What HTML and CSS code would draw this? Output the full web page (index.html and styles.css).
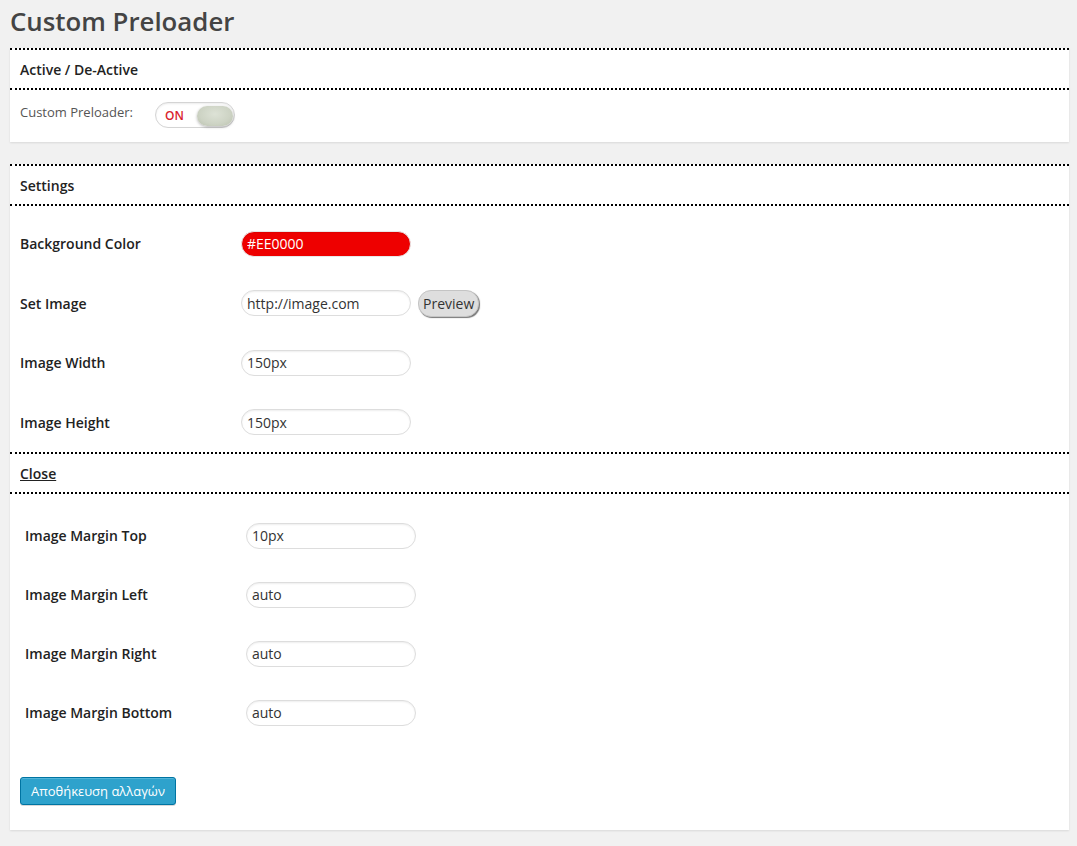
FILE: index.html
```html
<!DOCTYPE html>
<html>
<head>
<meta charset="utf-8">
<link rel="stylesheet" href="styles.css">
</head>
<body>
<div class="wrap">
  <h2 class="title">Custom Preloader</h2>

  <div class="panel panel-active">
    <div class="panel-head">Active / De-Active</div>
    <div class="toggle-row">
      <span class="toggle-label">Custom Preloader:</span>
      <span class="toggle"><span class="toggle-on">ON</span><span class="knob"></span></span>
    </div>
  </div>

  <div class="panel panel-settings">
    <div class="panel-head">Settings</div>
    <div class="rows rows-main">
      <div class="row">
        <span class="label">Background Color</span>
        <input class="field field-red" type="text" value="#EE0000">
      </div>
      <div class="row">
        <span class="label">Set Image</span>
        <input class="field" type="text" value="http://image.com">
        <button class="preview">Preview</button>
      </div>
      <div class="row">
        <span class="label">Image Width</span>
        <input class="field" type="text" value="150px">
      </div>
      <div class="row">
        <span class="label">Image Height</span>
        <input class="field" type="text" value="150px">
      </div>
    </div>
    <div class="panel-head"><span class="close">Close</span></div>
    <div class="rows rows-margin">
      <div class="row">
        <span class="label">Image Margin Top</span>
        <input class="field" type="text" value="10px">
      </div>
      <div class="row">
        <span class="label">Image Margin Left</span>
        <input class="field" type="text" value="auto">
      </div>
      <div class="row">
        <span class="label">Image Margin Right</span>
        <input class="field" type="text" value="auto">
      </div>
      <div class="row">
        <span class="label">Image Margin Bottom</span>
        <input class="field" type="text" value="auto">
      </div>
    </div>
    <div class="actions">
      <button class="save">Αποθήκευση αλλαγών</button>
    </div>
  </div>
</div>
</body>
</html>
```

FILE: styles.css
```css
html, body {
  margin: 0;
  padding: 0;
  background: #f1f1f1;
}
body {
  font-family: "Open Sans", "Liberation Sans", sans-serif;
  color: #222;
  width: 1077px;
  height: 846px;
  overflow: hidden;
}
.wrap {
  padding: 0 8px 0 10px;
}
.title {
  margin: 0;
  padding-top: 3px;
  height: 45px;
  font-size: 25.8px;
  line-height: 36px;
  font-weight: 600;
  color: #444;
}
.panel {
  background: #fff;
  box-shadow: 0 1px 2px rgba(0, 0, 0, 0.1);
}
.panel-active {
  height: 94px;
}
.panel-settings {
  margin-top: 22px;
  height: 666px;
}
.panel-head {
  border-top: 2px dotted #000;
  border-bottom: 2px dotted #000;
  height: 38px;
  line-height: 40px;
  padding-left: 10px;
  font-size: 14px;
  font-weight: 600;
  color: #222;
}
.close {
  text-decoration: underline;
}
.toggle-row {
  display: flex;
  align-items: flex-start;
  padding: 12px 0 0 10px;
  height: 27px;
}
.toggle-label {
  font-size: 13px;
  line-height: 18px;
  margin-top: 1px;
  color: #555;
  width: 135px;
}
.toggle {
  position: relative;
  display: inline-flex;
  align-items: center;
  width: 78px;
  height: 24px;
  border: 1px solid #d4d4d4;
  border-radius: 13px;
  background: #fff;
  box-shadow: inset 0 1px 2px rgba(0, 0, 0, 0.08);
}
.toggle-on {
  margin-left: 9px;
  font-size: 12px;
  font-weight: 600;
  color: #d9232d;
}
.knob {
  position: absolute;
  right: 1px;
  top: 3px;
  width: 36px;
  height: 20px;
  border-radius: 10px;
  background: radial-gradient(ellipse at 50% 40%, #dde2d6 0%, #cdd3c4 60%, #b9c0ad 100%);
  box-shadow: 0 1px 3px rgba(0, 0, 0, 0.3);
}
.rows {
  display: flex;
  flex-direction: column;
}
.rows-main {
  padding: 8px 0 0 10px;
}
.rows-main .row {
  height: 59.5px;
}
.rows-margin {
  padding: 12px 0 0 15px;
}
.row {
  display: flex;
  align-items: center;
  height: 59px;
}
.label {
  width: 221px;
  font-size: 14px;
  font-weight: 600;
  color: #222;
}
.field {
  box-sizing: border-box;
  width: 170px;
  height: 26px;
  margin: 0;
  padding: 0 5px;
  border: 1px solid #ddd;
  border-radius: 13px;
  font-family: "Open Sans", "Liberation Sans", sans-serif;
  font-size: 14px;
  color: #333;
  background: #fff;
  box-shadow: inset 0 1px 2px rgba(0, 0, 0, 0.07);
  outline: none;
}
.field-red {
  background: #ee0000;
  color: #fff;
  border-color: #e8e8e8;
}
.preview {
  box-sizing: border-box;
  margin-left: 7px;
  height: 27px;
  padding: 0 4px;
  border: 1px solid #c4c4c4;
  border-radius: 13px;
  background: #dedede;
  font-family: "Open Sans", "Liberation Sans", sans-serif;
  font-size: 14px;
  color: #333;
  box-shadow: 1px 1px 1px #777;
}
.actions {
  padding: 35px 0 0 10px;
}
.save {
  box-sizing: border-box;
  height: 28px;
  padding: 0 10px 1px;
  border: 1px solid #0074a2;
  border-radius: 3px;
  background: #2ea2cc;
  color: #fff;
  font-family: "Open Sans", "Liberation Sans", sans-serif;
  font-size: 13px;
  line-height: 26px;
  box-shadow: inset 0 1px 0 rgba(120, 200, 230, 0.5), 0 1px 0 rgba(0, 0, 0, 0.15);
}
```
